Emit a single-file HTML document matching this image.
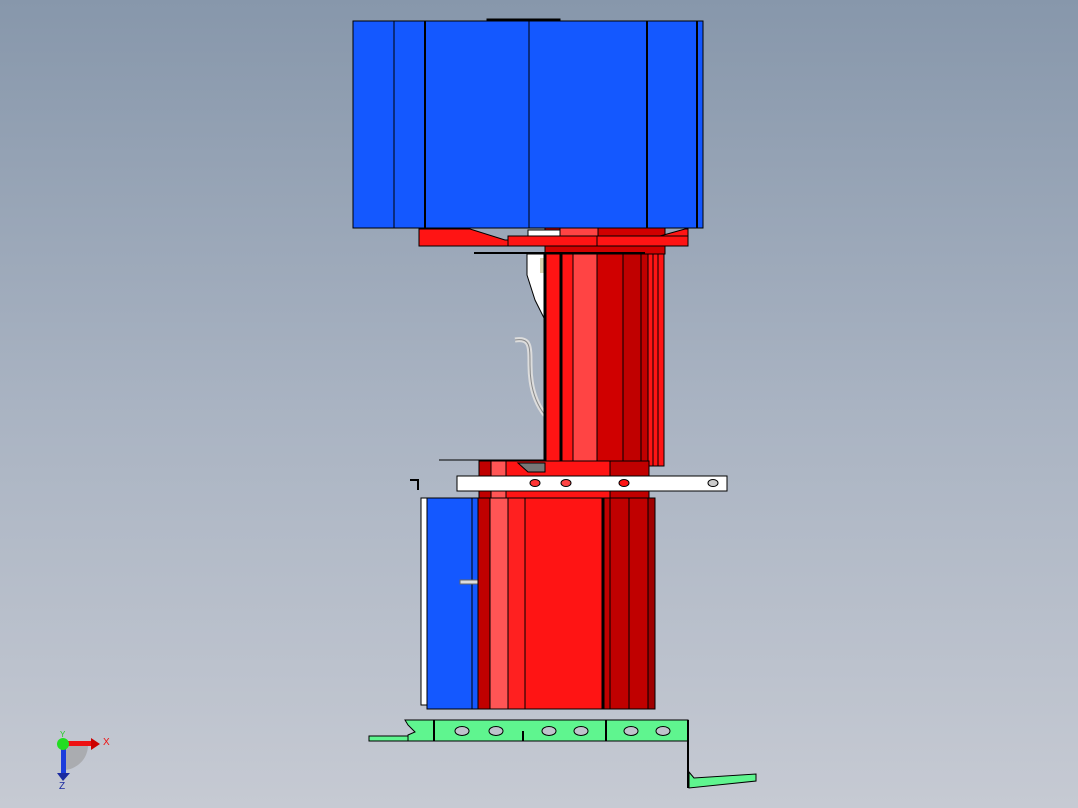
<!DOCTYPE html>
<html><head><style>
html,body{margin:0;padding:0;}
body{width:1078px;height:808px;overflow:hidden;background:linear-gradient(#8797ab,#a9b3c2 50%,#c6cad3);font-family:"Liberation Sans",sans-serif;}
</style></head><body>
<svg width="1078" height="808" viewBox="0 0 1078 808" xmlns="http://www.w3.org/2000/svg" style="position:absolute;left:0;top:0">
<g stroke="#000" stroke-width="1">
<!-- top blue -->
<rect x="487" y="19" width="73" height="3" fill="#000"/>
<rect x="353" y="21" width="350" height="207" fill="#1458ff"/>
<line x1="394" y1="21" x2="394" y2="228"/>
<line x1="425" y1="21" x2="425" y2="228" stroke-width="2"/>
<line x1="529" y1="21" x2="529" y2="228"/>
<line x1="647" y1="21" x2="647" y2="228" stroke-width="2"/>
<line x1="697" y1="21" x2="697" y2="228" stroke-width="2"/>
<!-- column behind flange -->
<rect x="545" y="228" width="120" height="26" fill="#d00000"/>
<rect x="560" y="228" width="38" height="10" fill="#ff4444"/>
<rect x="528" y="230" width="32" height="8" fill="#fff"/>
<!-- flange -->
<polygon points="419,229 470,229 505,240 688,240 688,246 419,246" fill="#ff1414"/>
<polygon points="660,236 685,229 688,229 688,240" fill="#ff1414"/>
<rect x="508" y="236" width="180" height="10" fill="#ff1414"/>
<line x1="597" y1="236" x2="597" y2="246"/>
<line x1="474" y1="253" x2="645" y2="253" stroke-width="2"/>
<!-- left white pieces -->
<polygon points="527,254 545,254 545,320 535,300 527,275" fill="#fff"/>
<rect x="540" y="258" width="5" height="15" fill="#d8d4b0" stroke="none"/>
<path d="M515,340 C530,338 530,345 530,365 C530,390 537,405 545,415" fill="none" stroke="#ddd" stroke-width="5"/>
<path d="M515,340 C530,338 530,345 530,365 C530,390 537,405 545,415" fill="none" stroke="#888" stroke-width="1"/>
<!-- main column -->
<rect x="545" y="254" width="103" height="212" fill="#ff1414"/>
<rect x="573" y="254" width="24" height="212" fill="#ff4444"/>
<rect x="597" y="254" width="26" height="212" fill="#d00000"/>
<rect x="623" y="254" width="25" height="212" fill="#c00000"/>
<rect x="648" y="254" width="16" height="212" fill="#ff1414"/>
<line x1="653" y1="254" x2="653" y2="466"/>
<line x1="658" y1="254" x2="658" y2="466"/>
<line x1="545" y1="254" x2="545" y2="466" stroke-width="3"/>
<line x1="561" y1="254" x2="561" y2="466" stroke-width="3"/>
<line x1="573" y1="254" x2="573" y2="466"/>
<line x1="641" y1="254" x2="641" y2="466"/>
<!-- plate -->
<line x1="439" y1="460" x2="545" y2="460"/>
<rect x="479" y="461" width="170" height="37" fill="#ff1414"/>
<rect x="479" y="461" width="12" height="37" fill="#c00000"/>
<rect x="491" y="461" width="15" height="37" fill="#ff5555"/>
<rect x="610" y="461" width="39" height="37" fill="#c00000"/>
<polygon points="518,463 545,463 545,472 528,472" fill="#777"/>
<!-- white bar -->
<rect x="457" y="476" width="270" height="15" fill="#fff"/>
<ellipse cx="535" cy="483" rx="5" ry="3.5" fill="#ff3333"/>
<ellipse cx="566" cy="483" rx="5" ry="3.5" fill="#ff4444"/>
<ellipse cx="624" cy="483" rx="5" ry="3.5" fill="#ff1414"/>
<ellipse cx="713" cy="483" rx="5" ry="3.5" fill="#ccc"/>
<path d="M410,480 L418,480 L418,490" fill="none" stroke-width="2"/>
<!-- lower -->
<rect x="421" y="498" width="6" height="207" fill="#fff"/>
<rect x="427" y="498" width="51" height="211" fill="#1458ff"/>
<line x1="472" y1="498" x2="472" y2="709"/>
<rect x="460" y="580" width="18" height="4" fill="#ddd" stroke="#666"/>
<rect x="478" y="498" width="177" height="211" fill="#ff1414"/>
<rect x="478" y="498" width="12" height="211" fill="#c00000"/>
<rect x="490" y="498" width="18" height="211" fill="#ff5555"/>
<rect x="508" y="498" width="17" height="211" fill="#ff2020"/>
<rect x="603" y="498" width="52" height="211" fill="#c00000"/>
<rect x="648" y="498" width="7" height="211" fill="#a00000"/>
<line x1="603" y1="498" x2="603" y2="709" stroke-width="3"/>
<line x1="610" y1="498" x2="610" y2="709"/>
<line x1="629" y1="498" x2="629" y2="709"/>
<line x1="648" y1="498" x2="648" y2="709"/>
<!-- green rail -->
<polygon points="405,720 688,720 688,741 408,741 408,737 369,737 369,741 408,741 408,735 415,732 408,725" fill="#5ff58f"/>
<rect x="369" y="736" width="39" height="5" fill="#5ff58f"/>
<line x1="434" y1="720" x2="434" y2="741" stroke-width="2"/>
<line x1="606" y1="720" x2="606" y2="741" stroke-width="2"/>
<line x1="523" y1="731" x2="523" y2="741" stroke-width="2"/>
<g fill="#bfc3cc">
<ellipse cx="462" cy="731" rx="7" ry="4.5"/><ellipse cx="496" cy="731" rx="7" ry="4.5"/>
<ellipse cx="549" cy="731" rx="7" ry="4.5"/><ellipse cx="581" cy="731" rx="7" ry="4.5"/>
<ellipse cx="631" cy="731" rx="7" ry="4.5"/><ellipse cx="663" cy="731" rx="7" ry="4.5"/>
</g>
<line x1="688" y1="720" x2="688" y2="788" stroke-width="2"/>
<polygon points="689,772 694,778 756,774 756,781 689,788" fill="#5ff58f"/>
</g>
<!-- axis triad -->
<path d="M63,745 L63,770 A25,25 0 0 0 88,745 Z" fill="#999" opacity="0.6"/>
<rect x="61" y="743" width="5" height="30" fill="#1a3cdc"/>
<polygon points="57,773 70,773 63,781" fill="#1a2aa0"/>
<rect x="63" y="741" width="29" height="5" fill="#ee1111"/>
<polygon points="91,738 100,744 91,750" fill="#cc0000"/>
<circle cx="63" cy="744" r="6" fill="#22dd22"/>
<text x="103" y="745" font-size="10" fill="#ee1111">X</text>
<text x="60" y="737" font-size="8" fill="#22cc22">Y</text>
<text x="59" y="789" font-size="10" fill="#1a2aa0">Z</text>
</svg>
</body></html>
